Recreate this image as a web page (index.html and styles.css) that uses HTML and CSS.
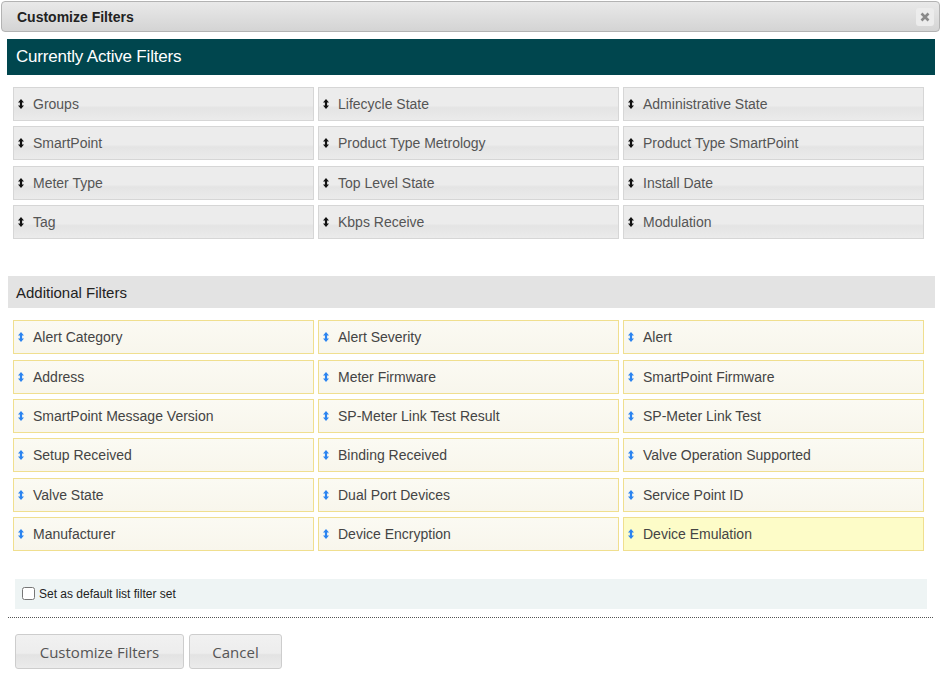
FILE: index.html
```html
<!DOCTYPE html>
<html>
<head>
<meta charset="utf-8">
<link rel="stylesheet" href="styles.css">
</head>
<body>
<div class="dialog">
  <div class="titlebar">
    <span class="title">Customize Filters</span>
    <span class="close"><svg width="10" height="10" viewBox="0 0 10 10"><path d="M1.5 1.5 L8.5 8.5 M8.5 1.5 L1.5 8.5" stroke="#8a8a8a" stroke-width="2.6" stroke-linecap="butt"/></svg></span>
  </div>
  <div class="content">
    <div class="active-head">Currently Active Filters</div>
    <div class="grid active">
      <div class="item"><svg class="ico" viewBox="0 0 6 10"><path d="M3 0 L6 3.4 H4.1 V6.6 H6 L3 10 L0 6.6 H1.9 V3.4 H0 Z"/></svg>Groups</div>
      <div class="item"><svg class="ico" viewBox="0 0 6 10"><path d="M3 0 L6 3.4 H4.1 V6.6 H6 L3 10 L0 6.6 H1.9 V3.4 H0 Z"/></svg>Lifecycle State</div>
      <div class="item"><svg class="ico" viewBox="0 0 6 10"><path d="M3 0 L6 3.4 H4.1 V6.6 H6 L3 10 L0 6.6 H1.9 V3.4 H0 Z"/></svg>Administrative State</div>
      <div class="item"><svg class="ico" viewBox="0 0 6 10"><path d="M3 0 L6 3.4 H4.1 V6.6 H6 L3 10 L0 6.6 H1.9 V3.4 H0 Z"/></svg>SmartPoint</div>
      <div class="item"><svg class="ico" viewBox="0 0 6 10"><path d="M3 0 L6 3.4 H4.1 V6.6 H6 L3 10 L0 6.6 H1.9 V3.4 H0 Z"/></svg>Product Type Metrology</div>
      <div class="item"><svg class="ico" viewBox="0 0 6 10"><path d="M3 0 L6 3.4 H4.1 V6.6 H6 L3 10 L0 6.6 H1.9 V3.4 H0 Z"/></svg>Product Type SmartPoint</div>
      <div class="item"><svg class="ico" viewBox="0 0 6 10"><path d="M3 0 L6 3.4 H4.1 V6.6 H6 L3 10 L0 6.6 H1.9 V3.4 H0 Z"/></svg>Meter Type</div>
      <div class="item"><svg class="ico" viewBox="0 0 6 10"><path d="M3 0 L6 3.4 H4.1 V6.6 H6 L3 10 L0 6.6 H1.9 V3.4 H0 Z"/></svg>Top Level State</div>
      <div class="item"><svg class="ico" viewBox="0 0 6 10"><path d="M3 0 L6 3.4 H4.1 V6.6 H6 L3 10 L0 6.6 H1.9 V3.4 H0 Z"/></svg>Install Date</div>
      <div class="item"><svg class="ico" viewBox="0 0 6 10"><path d="M3 0 L6 3.4 H4.1 V6.6 H6 L3 10 L0 6.6 H1.9 V3.4 H0 Z"/></svg>Tag</div>
      <div class="item"><svg class="ico" viewBox="0 0 6 10"><path d="M3 0 L6 3.4 H4.1 V6.6 H6 L3 10 L0 6.6 H1.9 V3.4 H0 Z"/></svg>Kbps Receive</div>
      <div class="item"><svg class="ico" viewBox="0 0 6 10"><path d="M3 0 L6 3.4 H4.1 V6.6 H6 L3 10 L0 6.6 H1.9 V3.4 H0 Z"/></svg>Modulation</div>
    </div>
    <div class="add-head">Additional Filters</div>
    <div class="grid additional">
      <div class="item"><svg class="ico" viewBox="0 0 6 10"><path d="M3 0 L6 3.4 H4.1 V6.6 H6 L3 10 L0 6.6 H1.9 V3.4 H0 Z"/></svg>Alert Category</div>
      <div class="item"><svg class="ico" viewBox="0 0 6 10"><path d="M3 0 L6 3.4 H4.1 V6.6 H6 L3 10 L0 6.6 H1.9 V3.4 H0 Z"/></svg>Alert Severity</div>
      <div class="item"><svg class="ico" viewBox="0 0 6 10"><path d="M3 0 L6 3.4 H4.1 V6.6 H6 L3 10 L0 6.6 H1.9 V3.4 H0 Z"/></svg>Alert</div>
      <div class="item"><svg class="ico" viewBox="0 0 6 10"><path d="M3 0 L6 3.4 H4.1 V6.6 H6 L3 10 L0 6.6 H1.9 V3.4 H0 Z"/></svg>Address</div>
      <div class="item"><svg class="ico" viewBox="0 0 6 10"><path d="M3 0 L6 3.4 H4.1 V6.6 H6 L3 10 L0 6.6 H1.9 V3.4 H0 Z"/></svg>Meter Firmware</div>
      <div class="item"><svg class="ico" viewBox="0 0 6 10"><path d="M3 0 L6 3.4 H4.1 V6.6 H6 L3 10 L0 6.6 H1.9 V3.4 H0 Z"/></svg>SmartPoint Firmware</div>
      <div class="item"><svg class="ico" viewBox="0 0 6 10"><path d="M3 0 L6 3.4 H4.1 V6.6 H6 L3 10 L0 6.6 H1.9 V3.4 H0 Z"/></svg>SmartPoint Message Version</div>
      <div class="item"><svg class="ico" viewBox="0 0 6 10"><path d="M3 0 L6 3.4 H4.1 V6.6 H6 L3 10 L0 6.6 H1.9 V3.4 H0 Z"/></svg>SP-Meter Link Test Result</div>
      <div class="item"><svg class="ico" viewBox="0 0 6 10"><path d="M3 0 L6 3.4 H4.1 V6.6 H6 L3 10 L0 6.6 H1.9 V3.4 H0 Z"/></svg>SP-Meter Link Test</div>
      <div class="item"><svg class="ico" viewBox="0 0 6 10"><path d="M3 0 L6 3.4 H4.1 V6.6 H6 L3 10 L0 6.6 H1.9 V3.4 H0 Z"/></svg>Setup Received</div>
      <div class="item"><svg class="ico" viewBox="0 0 6 10"><path d="M3 0 L6 3.4 H4.1 V6.6 H6 L3 10 L0 6.6 H1.9 V3.4 H0 Z"/></svg>Binding Received</div>
      <div class="item"><svg class="ico" viewBox="0 0 6 10"><path d="M3 0 L6 3.4 H4.1 V6.6 H6 L3 10 L0 6.6 H1.9 V3.4 H0 Z"/></svg>Valve Operation Supported</div>
      <div class="item"><svg class="ico" viewBox="0 0 6 10"><path d="M3 0 L6 3.4 H4.1 V6.6 H6 L3 10 L0 6.6 H1.9 V3.4 H0 Z"/></svg>Valve State</div>
      <div class="item"><svg class="ico" viewBox="0 0 6 10"><path d="M3 0 L6 3.4 H4.1 V6.6 H6 L3 10 L0 6.6 H1.9 V3.4 H0 Z"/></svg>Dual Port Devices</div>
      <div class="item"><svg class="ico" viewBox="0 0 6 10"><path d="M3 0 L6 3.4 H4.1 V6.6 H6 L3 10 L0 6.6 H1.9 V3.4 H0 Z"/></svg>Service Point ID</div>
      <div class="item"><svg class="ico" viewBox="0 0 6 10"><path d="M3 0 L6 3.4 H4.1 V6.6 H6 L3 10 L0 6.6 H1.9 V3.4 H0 Z"/></svg>Manufacturer</div>
      <div class="item"><svg class="ico" viewBox="0 0 6 10"><path d="M3 0 L6 3.4 H4.1 V6.6 H6 L3 10 L0 6.6 H1.9 V3.4 H0 Z"/></svg>Device Encryption</div>
      <div class="item hover"><svg class="ico" viewBox="0 0 6 10"><path d="M3 0 L6 3.4 H4.1 V6.6 H6 L3 10 L0 6.6 H1.9 V3.4 H0 Z"/></svg>Device Emulation</div>
    </div>
    <label class="default-bar"><input type="checkbox" class="chk"><span>Set as default list filter set</span></label>
    <div class="divider"></div>
    <div class="buttons">
      <button class="btn btn-primary">Customize Filters</button>
      <button class="btn btn-cancel">Cancel</button>
    </div>
  </div>
</div>
</body>
</html>
```

FILE: styles.css
```css
html, body {
  margin: 0;
  padding: 0;
  background: #ffffff;
}
body {
  font-family: "Liberation Sans", Arial, sans-serif;
  width: 941px;
  height: 690px;
  overflow: hidden;
}
.dialog {
  display: flex;
  flex-direction: column;
}
.titlebar {
  margin: 1px 0 0 1px;
  width: 939px;
  box-sizing: border-box;
  height: 31px;
  border: 1px solid #b3b3b3;
  border-radius: 4px;
  background: linear-gradient(#e9e9e9, #d4d4d4);
  display: flex;
  align-items: center;
  justify-content: space-between;
  padding: 0 5px 0 15px;
}
.title {
  font-weight: bold;
  font-size: 14px;
  color: #222;
}
.close {
  width: 18px;
  height: 18px;
  border-radius: 3px;
  background: #ececec;
  display: flex;
  align-items: center;
  justify-content: center;
}
.content {
  padding: 7px 6px 0 7px;
}
.active-head {
  height: 36px;
  background: #00464e;
  color: #fff;
  font-size: 17px;
  display: flex;
  align-items: center;
  padding-left: 9px;
  letter-spacing: -0.2px;
}
.grid {
  display: grid;
  grid-template-columns: 301px 301px 301px;
  column-gap: 4px;
  row-gap: 5.4px;
  margin-left: 6px;
}
.grid.active {
  margin-top: 12px;
}
.item {
  box-sizing: border-box;
  height: 34px;
  display: flex;
  align-items: center;
  font-size: 14px;
  color: #555;
  padding-left: 4px;
  white-space: nowrap;
}
.ico {
  width: 6px;
  height: 10px;
  margin-right: 9px;
  flex: none;
}
.active .item {
  border: 1px solid #d6d6d6;
  background: linear-gradient(#ececec 0%, #ececec 55%, #e4e4e4 62%, #ebebeb 100%);
}
.active .ico path {
  fill: #111;
}
.additional .item {
  border: 1px solid #f0df8f;
  background: linear-gradient(#fbfaf3, #f8f6ec);
  color: #444;
}
.additional .item.hover {
  background: #fdfcc8;
}
.additional .ico path {
  fill: #2b84f0;
}
.add-head {
  margin-top: 37px;
  margin-left: 1px;
  height: 32px;
  background: #e3e3e3;
  color: #222;
  font-size: 15px;
  display: flex;
  align-items: center;
  padding-left: 8px;
}
.grid.additional {
  margin-top: 12px;
}
.default-bar {
  margin: 28px 8px 0 8px;
  height: 30px;
  background: #eef4f4;
  display: flex;
  align-items: center;
  font-size: 12px;
  color: #222;
  padding-left: 7px;
}
.chk {
  margin: 0 4px 2px 0;
  width: 13px;
  height: 13px;
}
.divider {
  margin: 8px 2px 0 1px;
  border-top: 1px dotted #555;
}
.buttons {
  display: flex;
  gap: 5px;
  margin: 16px 0 0 8px;
}
.btn {
  font-family: "Open Sans", "Liberation Sans", sans-serif;
  font-size: 15px;
  color: #555;
  height: 35px;
  border: 1px solid #cdcdcd;
  border-radius: 3px;
  background: linear-gradient(#f1f1f1 0%, #ededed 55%, #e3e3e3 60%, #ebebeb 100%);
  padding: 0;
}
.btn-primary {
  width: 169px;
}
.btn-cancel {
  width: 93px;
}
```
